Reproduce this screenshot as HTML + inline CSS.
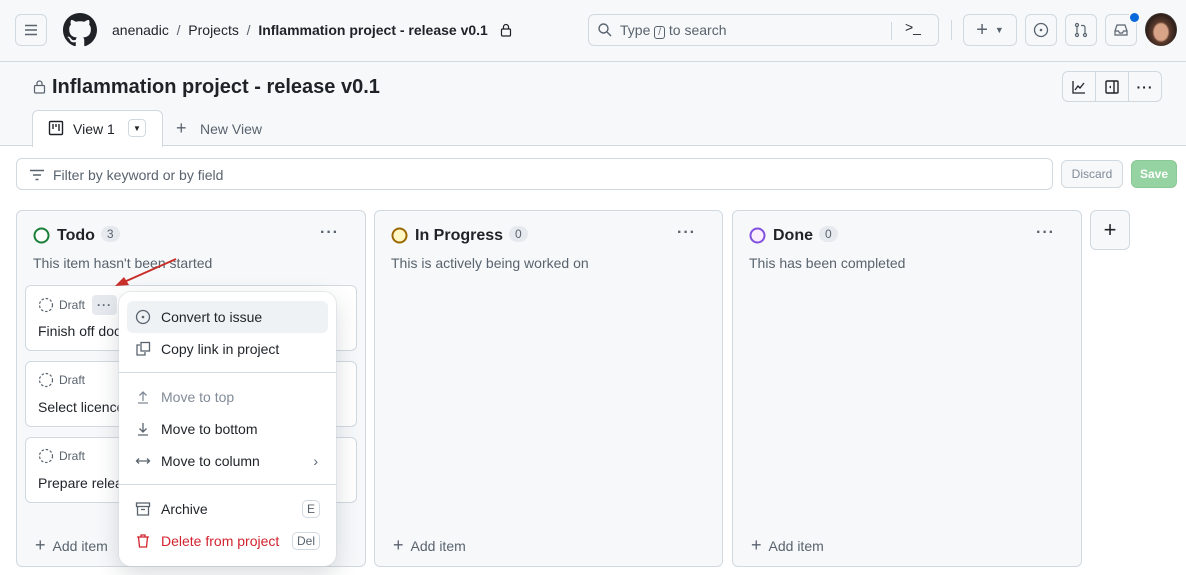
<!DOCTYPE html>
<html><head><meta charset="utf-8"><style>
*{box-sizing:border-box;margin:0;padding:0}
body{width:1186px;height:575px;overflow:hidden;background:#fff;font-family:"Liberation Sans",sans-serif;color:#1f2328;position:relative;font-size:14px}
.abs{position:absolute}
.btn{position:absolute;border:1px solid #d1d9e0;border-radius:6px;background:#f6f8fa;display:flex;align-items:center;justify-content:center}
svg{display:block}
.col{position:absolute;top:210px;height:357px;border:1px solid #d1d9e0;border-radius:6px;background:#f6f8fa}
.col h3{position:absolute;left:40px;top:15px;font-size:16px;font-weight:bold}
.cnt{display:inline-block;background:#e6eaef;border-radius:10px;font-size:12px;font-weight:normal;padding:1px 6px;margin-left:6px;color:#59636e;vertical-align:2px}
.desc{position:absolute;left:16px;top:44px;color:#59636e;font-size:14px}
.dots{position:absolute;top:13px;right:26px;font-size:16px;color:#59636e;letter-spacing:1px;font-weight:bold}
.add{position:absolute;left:18px;bottom:10px;color:#59636e;font-size:14px}
.card{position:absolute;left:25px;width:332px;height:66px;border:1px solid #d1d9e0;border-radius:6px;background:#fff}
.card .d{position:absolute;left:12px;top:9px;font-size:12px;color:#59636e;display:flex;align-items:center;gap:5px}
.card .t{position:absolute;left:12px;top:37px;font-size:14px}
.mi{position:absolute;left:8px;width:201px;height:32px;display:flex;align-items:center;padding-left:8px;gap:10px;font-size:14px;border-radius:6px}
.kbd{position:absolute;right:16px;border:1px solid #d1d9e0;border-radius:5px;font-size:12px;padding:1px 4px;color:#59636e}
</style></head><body>
<div class="abs" style="left:0;top:0;width:1186px;height:146px;background:#f6f8fa;border-bottom:1px solid #d1d9e0"></div>
<div class="abs" style="left:0;top:61px;width:1186px;height:1px;background:#d1d9e0"></div>
<div class="btn" style="left:15px;top:14px;width:32px;height:32px"><svg width="16" height="16"><path d="M2 3.5h12M2 8h12M2 12.5h12" stroke="#59636e" stroke-width="1.4"/></svg></div>
<svg class="abs" style="left:63px;top:13px" width="34" height="34" viewBox="0 0 16 16"><path fill="#1f2328" d="M8 0C3.58 0 0 3.58 0 8c0 3.540 2.29 6.53 5.47 7.59.4.07.55-.17.55-.38 0-.19-.01-.82-.01-1.49-2.01.37-2.53-.49-2.69-.94-.09-.23-.48-.94-.82-1.130-.28-.15-.68-.52-.01-.53.63-.01 1.080.58 1.230.82.72 1.21 1.87.87 2.33.66.07-.52.28-.87.51-1.07-1.78-.2-3.64-.89-3.64-3.95 0-.87.31-1.59.82-2.15-.08-.2-.36-1.020.08-2.12 0 0 .67-.21 2.2.82.64-.18 1.32-.27 2-.27.68 0 1.36.09 2 .27 1.53-1.04 2.2-.82 2.2-.82.44 1.1.16 1.92.08 2.12.51.56.82 1.27.82 2.15 0 3.07-1.87 3.75-3.65 3.95.29.25.54.73.54 1.48 0 1.07-.01 1.93-.01 2.2 0 .21.15.46.55.38A8.013 8.013 0 0016 8c0-4.42-3.58-8-8-8z"/></svg>
<div class="abs" style="left:112px;top:22px;font-size:14px;white-space:nowrap">anenadic &nbsp;<span style="color:#59636e">/</span>&nbsp; Projects &nbsp;<span style="color:#59636e">/</span>&nbsp; <b>Inflammation project - release v0.1</b></div>
<svg class="abs" style="left:500px;top:23px" width="12" height="14"><rect x="1.5" y="6" width="9" height="7" rx="1" fill="none" stroke="#1f2328" stroke-width="1.2"/><path d="M3.5 6V4a2.5 2.5 0 015 0v2" fill="none" stroke="#1f2328" stroke-width="1.2"/></svg>
<div class="btn" style="left:588px;top:14px;width:351px;height:32px;background:#f6f8fa;justify-content:flex-start;padding-left:8px;color:#59636e;gap:7px"><svg width="16" height="16"><circle cx="6.5" cy="6.5" r="4.5" fill="none" stroke="#59636e" stroke-width="1.4"/><path d="M10 10l4 4" stroke="#59636e" stroke-width="1.4"/></svg><span>Type <span style="border:1px solid #59636e;border-radius:3px;font-size:10px;padding:0 3px">/</span> to search</span>
<div class="abs" style="left:302px;top:7px;height:18px;width:1px;background:#d1d9e0"></div>
<div class="abs" style="left:316px;top:4px;color:#1f2328">&gt;_</div></div>
<div class="abs" style="left:951px;top:20px;width:1px;height:20px;background:#d1d9e0"></div>
<div class="btn" style="left:963px;top:14px;width:54px;height:32px;font-size:20px;color:#59636e">+ <span style="font-size:9px;margin-left:7px">▼</span></div>
<div class="btn" style="left:1025px;top:14px;width:32px;height:32px"><svg width="16" height="16"><circle cx="8" cy="8" r="6.5" fill="none" stroke="#59636e" stroke-width="1.3"/><circle cx="8" cy="8" r="1.3" fill="#59636e"/></svg></div>
<div class="btn" style="left:1065px;top:14px;width:32px;height:32px"><svg width="16" height="16"><circle cx="4" cy="3" r="1.5" fill="none" stroke="#59636e" stroke-width="1.2"/><circle cx="4" cy="13" r="1.5" fill="none" stroke="#59636e" stroke-width="1.2"/><circle cx="12" cy="13" r="1.5" fill="none" stroke="#59636e" stroke-width="1.2"/><path d="M4 4.5v7M12 11.5V5.5Q12 3.5 10 3.5H8" stroke="#59636e" stroke-width="1.2" fill="none"/></svg></div>
<div class="btn" style="left:1105px;top:14px;width:32px;height:32px"><svg width="16" height="16"><path d="M2 9l2-6h8l2 6v4H2z M2 9h3.5l1 2h3l1-2H14" fill="none" stroke="#59636e" stroke-width="1.2"/></svg></div>
<div class="abs" style="left:1130px;top:13px;width:9px;height:9px;border-radius:50%;background:#0969da;box-shadow:0 0 0 1.5px #f6f8fa"></div>
<div class="abs" style="left:1145px;top:13px;width:32px;height:33px;border-radius:50%;background:radial-gradient(ellipse at 50% 58%,#d8a386 0 30%,#5a3a2c 38%,#2d1f1a 66%,#8e9894 90%)"></div>

<svg class="abs" style="left:33px;top:79px" width="13" height="15"><rect x="1.5" y="6.5" width="10" height="7.5" rx="1" fill="none" stroke="#59636e" stroke-width="1.2"/><path d="M4 6.5V4.5a2.5 2.5 0 015 0v2" fill="none" stroke="#59636e" stroke-width="1.2"/></svg>
<div class="abs" style="left:52px;top:76px;font-size:20px;font-weight:bold;white-space:nowrap">Inflammation project - release v0.1</div>
<div class="btn" style="left:1062px;top:71px;width:100px;height:31px;background:#f6f8fa;justify-content:flex-start">
<div style="width:33px;height:100%;border-right:1px solid #d1d9e0;display:flex;align-items:center;justify-content:center"><svg width="16" height="16"><path d="M2 2v12h12M4 11l3-4 2 2 4-5" fill="none" stroke="#1f2328" stroke-width="1.3"/></svg></div>
<div style="width:33px;height:100%;border-right:1px solid #d1d9e0;display:flex;align-items:center;justify-content:center"><svg width="16" height="16"><rect x="2" y="2" width="12" height="12" rx="1" fill="none" stroke="#1f2328" stroke-width="1.4"/><path d="M10 2v12" stroke="#1f2328" stroke-width="1.4"/><path d="M7 6.5v3l-2-1.5z" fill="#1f2328"/></svg></div>
<div style="width:32px;text-align:center;font-weight:bold;letter-spacing:1px">···</div></div>

<div class="abs" style="left:32px;top:110px;width:131px;height:37px;background:#fff;border:1px solid #d1d9e0;border-bottom:none;border-radius:6px 6px 0 0"></div>
<svg class="abs" style="left:48px;top:120px" width="16" height="16"><rect x="1.5" y="1.5" width="13" height="13" rx="1" fill="none" stroke="#1f2328" stroke-width="1.4"/><path d="M5 4v5M8 4v3M11 4v7" stroke="#1f2328" stroke-width="1.4"/></svg>
<div class="abs" style="left:73px;top:121px">View 1</div>
<div class="abs" style="left:128px;top:119px;width:18px;height:18px;border:1px solid #d1d9e0;border-radius:4px;font-size:8px;text-align:center;line-height:17px">▼</div>
<div class="abs" style="left:176px;top:118px;font-size:18px;color:#59636e">+</div>
<div class="abs" style="left:200px;top:121px;color:#59636e">New View</div>

<div class="abs" style="left:16px;top:158px;width:1037px;height:32px;border:1px solid #d1d9e0;border-radius:6px;background:#fff"></div>
<svg class="abs" style="left:29px;top:167px" width="16" height="16"><path d="M1 3.5h14M4 8h8M6.5 12.5h3" stroke="#59636e" stroke-width="1.4"/></svg>
<div class="abs" style="left:53px;top:167px;color:#59636e">Filter by keyword or by field</div>
<div class="btn" style="left:1061px;top:160px;width:62px;height:28px;font-size:12px;color:#818b98">Discard</div>
<div class="btn" style="left:1131px;top:160px;width:46px;height:28px;font-size:12px;color:#fff;background:#95d3a2;border-color:#8ac895;font-weight:bold">Save</div>

<div class="col" style="left:16px;width:350px"><svg class="abs" style="left:16px;top:16px" width="17" height="17"><circle cx="8.5" cy="8.5" r="7" fill="#fff" stroke="#1a7f37" stroke-width="2"/></svg><h3>Todo<span class="cnt">3</span></h3><div class="dots">···</div><div class="desc">This item hasn't been started</div><div class="add"><span style="font-size:18px">+</span>&nbsp; Add item</div></div>
<div class="col" style="left:374px;width:349px"><svg class="abs" style="left:16px;top:16px" width="17" height="17"><circle cx="8.5" cy="8.5" r="7" fill="#fff8c5" stroke="#9a6700" stroke-width="2"/></svg><h3>In Progress<span class="cnt">0</span></h3><div class="dots">···</div><div class="desc">This is actively being worked on</div><div class="add"><span style="font-size:18px">+</span>&nbsp; Add item</div></div>
<div class="col" style="left:732px;width:350px"><svg class="abs" style="left:16px;top:16px" width="17" height="17"><circle cx="8.5" cy="8.5" r="7" fill="#fbefff" stroke="#8250df" stroke-width="2"/></svg><h3>Done<span class="cnt">0</span></h3><div class="dots">···</div><div class="desc">This has been completed</div><div class="add"><span style="font-size:18px">+</span>&nbsp; Add item</div></div>
<div class="btn" style="left:1090px;top:210px;width:40px;height:40px;font-size:22px;background:#f6f8fa">+</div>

<div class="card" style="top:285px"><div class="d"><svg width="16" height="16"><circle cx="8" cy="8" r="6.5" fill="none" stroke="#59636e" stroke-width="1.2" stroke-dasharray="2.5 1.8"/></svg>Draft <span style="background:#e6eaef;border-radius:4px;padding:3px 5px;font-weight:bold;letter-spacing:1px;margin-left:2px">···</span></div><div class="t">Finish off documentation</div></div>
<div class="card" style="top:361px"><div class="d" style="top:10px"><svg width="16" height="16"><circle cx="8" cy="8" r="6.5" fill="none" stroke="#59636e" stroke-width="1.2" stroke-dasharray="2.5 1.8"/></svg>Draft</div><div class="t">Select licence</div></div>
<div class="card" style="top:437px"><div class="d" style="top:10px"><svg width="16" height="16"><circle cx="8" cy="8" r="6.5" fill="none" stroke="#59636e" stroke-width="1.2" stroke-dasharray="2.5 1.8"/></svg>Draft</div><div class="t">Prepare release</div></div>

<svg class="abs" style="left:110px;top:255px" width="80" height="40"><path d="M66 4L14 27" stroke="#c9302c" stroke-width="2"/><path d="M5 31l14-1-5-8z" fill="#c9302c"/></svg>

<div class="abs" style="left:119px;top:292px;width:217px;height:274px;background:#fff;border-radius:12px;box-shadow:0 0 0 1px #d1d9e080,0 8px 24px rgba(66,74,83,.2)">
<div class="mi" style="top:9px;background:#eff2f5"><svg width="16" height="16"><circle cx="8" cy="8" r="6.5" fill="none" stroke="#59636e" stroke-width="1.3"/><circle cx="8" cy="8" r="1.3" fill="#59636e"/></svg>Convert to issue</div>
<div class="mi" style="top:41px"><svg width="16" height="16"><path d="M5 4H2v10h8v-3" fill="none" stroke="#59636e" stroke-width="1.3"/><rect x="6" y="1.5" width="8.5" height="8.5" fill="none" stroke="#59636e" stroke-width="1.3"/></svg>Copy link in project</div>
<div class="abs" style="left:0;top:80px;width:217px;height:1px;background:#d1d9e0"></div>
<div class="mi" style="top:89px;color:#818b98"><svg width="16" height="16"><path d="M3 14h10M8 12V3M4.5 6.5L8 3l3.5 3.5" fill="none" stroke="#818b98" stroke-width="1.3"/></svg>Move to top</div>
<div class="mi" style="top:121px"><svg width="16" height="16"><path d="M3 14h10M8 2v9M4.5 7.5L8 11l3.5-3.5" fill="none" stroke="#59636e" stroke-width="1.3"/></svg>Move to bottom</div>
<div class="mi" style="top:153px"><svg width="16" height="16"><path d="M1.5 8h13M4 5.5L1.5 8 4 10.5M12 5.5L14.5 8 12 10.5" fill="none" stroke="#59636e" stroke-width="1.3"/></svg>Move to column<span class="abs" style="right:10px;color:#59636e">›</span></div>
<div class="abs" style="left:0;top:192px;width:217px;height:1px;background:#d1d9e0"></div>
<div class="mi" style="top:201px"><svg width="16" height="16"><rect x="1.5" y="2" width="13" height="3.5" fill="none" stroke="#59636e" stroke-width="1.3"/><path d="M2.5 5.5V14h11V5.5M6 8.5h4" fill="none" stroke="#59636e" stroke-width="1.3"/></svg>Archive<span class="kbd" style="right:8px">E</span></div>
<div class="mi" style="top:233px;color:#d1242f"><svg width="16" height="16"><path d="M2 4h12M6 4V2h4v2M3.5 4l1 10h7l1-10" fill="none" stroke="#d1242f" stroke-width="1.3"/></svg>Delete from project<span class="kbd" style="right:8px">Del</span></div>
</div>
</body></html>
